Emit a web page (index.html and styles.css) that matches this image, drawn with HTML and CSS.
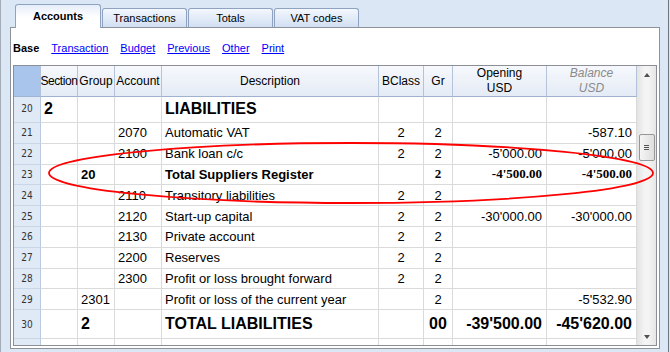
FILE: index.html
```html
<!DOCTYPE html>
<html>
<head>
    <title>Accounts</title>
    <link rel="stylesheet" href="styles.css">
</head>
<body>
<div class="window">
    <div class="tabs">
        <div class="tab active">Accounts</div>
        <div class="tab">Transactions</div>
        <div class="tab">Totals</div>
        <div class="tab">VAT codes</div>
    </div>
    <div class="panel">
        <div class="views">
            <b>Base</b>
            <a href="#">Transaction</a>
            <a href="#">Budget</a>
            <a href="#">Previous</a>
            <a href="#">Other</a>
            <a href="#">Print</a>
        </div>
        <div class="grid">
            <div class="sheet">
                <div class="row head">
                    <div class="c rn"></div>
                    <div class="c tight">Section</div>
                    <div class="c">Group</div>
                    <div class="c">Account</div>
                    <div class="c">Description</div>
                    <div class="c">BClass</div>
                    <div class="c">Gr</div>
                    <div class="c">Opening<br>USD</div>
                    <div class="c calc">Balance<br>USD</div>
                </div>
                <div class="row big top">
                    <div class="c rn">20</div>
                    <div class="c">2</div>
                    <div class="c"></div>
                    <div class="c"></div>
                    <div class="c">LIABILITIES</div>
                    <div class="c m"></div>
                    <div class="c m"></div>
                    <div class="c n"></div>
                    <div class="c n"></div>
                </div>
                <div class="row">
                    <div class="c rn">21</div>
                    <div class="c"></div>
                    <div class="c"></div>
                    <div class="c">2070</div>
                    <div class="c">Automatic VAT</div>
                    <div class="c m">2</div>
                    <div class="c m">2</div>
                    <div class="c n"></div>
                    <div class="c n">-587.10</div>
                </div>
                <div class="row">
                    <div class="c rn">22</div>
                    <div class="c"></div>
                    <div class="c"></div>
                    <div class="c">2100</div>
                    <div class="c">Bank loan c/c</div>
                    <div class="c m">2</div>
                    <div class="c m">2</div>
                    <div class="c n">-5'000.00</div>
                    <div class="c n">-5'000.00</div>
                </div>
                <div class="row sub">
                    <div class="c rn">23</div>
                    <div class="c"></div>
                    <div class="c">20</div>
                    <div class="c"></div>
                    <div class="c">Total Suppliers Register</div>
                    <div class="c m"></div>
                    <div class="c m serif">2</div>
                    <div class="c n serif">-4'500.00</div>
                    <div class="c n serif">-4'500.00</div>
                </div>
                <div class="row">
                    <div class="c rn">24</div>
                    <div class="c"></div>
                    <div class="c"></div>
                    <div class="c">2110</div>
                    <div class="c">Transitory liabilities</div>
                    <div class="c m">2</div>
                    <div class="c m">2</div>
                    <div class="c n"></div>
                    <div class="c n"></div>
                </div>
                <div class="row">
                    <div class="c rn">25</div>
                    <div class="c"></div>
                    <div class="c"></div>
                    <div class="c">2120</div>
                    <div class="c">Start-up capital</div>
                    <div class="c m">2</div>
                    <div class="c m">2</div>
                    <div class="c n">-30'000.00</div>
                    <div class="c n">-30'000.00</div>
                </div>
                <div class="row">
                    <div class="c rn">26</div>
                    <div class="c"></div>
                    <div class="c"></div>
                    <div class="c">2130</div>
                    <div class="c">Private account</div>
                    <div class="c m">2</div>
                    <div class="c m">2</div>
                    <div class="c n"></div>
                    <div class="c n"></div>
                </div>
                <div class="row">
                    <div class="c rn">27</div>
                    <div class="c"></div>
                    <div class="c"></div>
                    <div class="c">2200</div>
                    <div class="c">Reserves</div>
                    <div class="c m">2</div>
                    <div class="c m">2</div>
                    <div class="c n"></div>
                    <div class="c n"></div>
                </div>
                <div class="row">
                    <div class="c rn">28</div>
                    <div class="c"></div>
                    <div class="c"></div>
                    <div class="c">2300</div>
                    <div class="c">Profit or loss brought forward</div>
                    <div class="c m">2</div>
                    <div class="c m">2</div>
                    <div class="c n"></div>
                    <div class="c n"></div>
                </div>
                <div class="row">
                    <div class="c rn">29</div>
                    <div class="c"></div>
                    <div class="c">2301</div>
                    <div class="c"></div>
                    <div class="c">Profit or loss of the current year</div>
                    <div class="c m"></div>
                    <div class="c m">2</div>
                    <div class="c n"></div>
                    <div class="c n">-5'532.90</div>
                </div>
                <div class="row big total">
                    <div class="c rn">30</div>
                    <div class="c"></div>
                    <div class="c">2</div>
                    <div class="c"></div>
                    <div class="c">TOTAL LIABILITIES</div>
                    <div class="c m"></div>
                    <div class="c m">00</div>
                    <div class="c n">-39'500.00</div>
                    <div class="c n">-45'620.00</div>
                </div>
                <div class="row">
                    <div class="c rn">31</div>
                    <div class="c"></div>
                    <div class="c"></div>
                    <div class="c"></div>
                    <div class="c"></div>
                    <div class="c m"></div>
                    <div class="c m"></div>
                    <div class="c n"></div>
                    <div class="c n"></div>
                </div>
            </div>
            <div class="scrollbar">
                <div class="sb-btn"><span class="up"></span></div>
                <div class="thumb"><i></i><i></i><i></i></div>
                <div class="sb-space"></div>
                <div class="sb-btn"><span class="down"></span></div>
            </div>
        </div>
    </div>
    <!-- red marker round the total row -->
    <svg class="mark" width="670" height="352">
        <ellipse cx="351" cy="173" rx="302" ry="30" fill="none" stroke="#f00" stroke-width="1.8"/>
    </svg>
</div>
</body>
</html>
```

FILE: styles.css
```css
* {
    box-sizing: border-box;
}
html, body {
    margin: 0;
    padding: 0;
}
body {
    background-color: #dce7f5;
    font-family: "Liberation Sans", Arial, sans-serif;
    color: #000;
}
.window {
    position: relative;
    width: 669px;
    height: 352px;
    border-left: 1px solid #a3abb6;
    border-right: 1px solid #6f747a;
}

/* tabs */
.tabs {
    display: flex;
    align-items: flex-end;
    gap: 1px;
    height: 27px;
    padding-left: 14px;
}
.tab {
    width: 85px;
    height: 19px;
    border: 1px solid #8fa3c1;
    border-bottom: none;
    border-radius: 3px 3px 0 0;
    background: linear-gradient(#f3f7fd, #d2dff3);
    font-size: 11px;
    line-height: 18px;
    text-align: center;
}
.tab.active {
    position: relative;
    z-index: 1;
    width: 86px;
    height: 24px;
    margin-bottom: -1px;
    background: linear-gradient(#e6eefa, #fff 55%);
    font-weight: bold;
    line-height: 22px;
}

/* panel */
.panel {
    width: 650px;
    height: 322px;
    margin-left: 9px;
    border: 1px solid #8e9299;
    background-color: #fff;
}
.views {
    display: flex;
    gap: 12px;
    height: 37px;
    padding: 13px 0 0 2px;
    font-size: 11px;
    line-height: 14px;
}
.views a {
    color: #0000ff;
    text-decoration: underline;
}

/* grid */
.grid {
    display: flex;
    height: 281px;
    margin: 0 2px;
    border: 1px solid #8c8f95;
    overflow: hidden;
}
.sheet {
    width: 623px;
    flex: none;
}
.row {
    display: grid;
    grid-template-columns: 27px 37px 37px 47px 217px 45px 29px 94px 90px;
    height: 20.8px;
    font-size: 13px;
}
.c {
    display: flex;
    align-items: center;
    padding: 0 3px;
    border-right: 1px solid #dadada;
    border-bottom: 1px solid #dadada;
    white-space: nowrap;
    overflow: hidden;
}
.c.m {
    justify-content: center;
}
.c.n {
    justify-content: flex-end;
    padding-right: 4px;
}
.c.rn {
    justify-content: center;
    padding: 0;
    background-color: #e0e9f6;
    border-right-color: #b9c9df;
    border-bottom-color: #c9d6e8;
    font-family: "Liberation Sans Narrow", "DejaVu Sans Condensed", sans-serif;
    font-size: 10px;
    font-weight: normal;
    color: #333;
}

.head {
    height: 31px;
    font-size: 12px;
    background: linear-gradient(#f6f8fc, #e4ebf5);
}
.head .c {
    justify-content: center;
    text-align: center;
    line-height: 15px;
    border-right-color: #b4c3d9;
    border-bottom-color: #9fb3d0;
    overflow: visible;
}
.head .c.rn {
    background-color: #a9c5ec;
}
.head .calc {
    color: #8a8a8a;
    font-style: italic;
}
.head .tight {
    padding: 0;
    letter-spacing: -0.4px;
}

.big {
    font-size: 16px;
    font-weight: bold;
}
.big.top {
    height: 26px;
}
.big.top .c {
    padding-bottom: 2px;
}
.big.total {
    height: 29px;
}
.sub {
    font-weight: bold;
}
.sub .serif {
    font-family: "Liberation Serif", "Times New Roman", serif;
}

/* scrollbar */
.scrollbar {
    width: 19px;
    display: flex;
    flex-direction: column;
    align-items: center;
    background: linear-gradient(to right, #e3e3e3, #f4f4f4 40%, #f4f4f4 60%, #e6e6e6);
}
.sb-btn {
    width: 100%;
    height: 17px;
    display: flex;
    align-items: center;
    justify-content: center;
}
.up {
    border-left: 3px solid transparent;
    border-right: 3px solid transparent;
    border-bottom: 4px solid #505050;
}
.down {
    border-left: 3px solid transparent;
    border-right: 3px solid transparent;
    border-top: 4px solid #505050;
}
.thumb {
    width: 16px;
    height: 27px;
    margin-top: 51px;
    border: 1px solid #979797;
    border-radius: 2px;
    background: linear-gradient(to right, #f5f5f5, #dedede);
    display: flex;
    flex-direction: column;
    align-items: center;
    justify-content: center;
    gap: 1px;
}
.thumb i {
    width: 5px;
    height: 1px;
    background-color: #555;
}
.sb-space {
    flex: 1;
}

.mark {
    position: absolute;
    left: -1px;
    top: 0;
    pointer-events: none;
}
```
